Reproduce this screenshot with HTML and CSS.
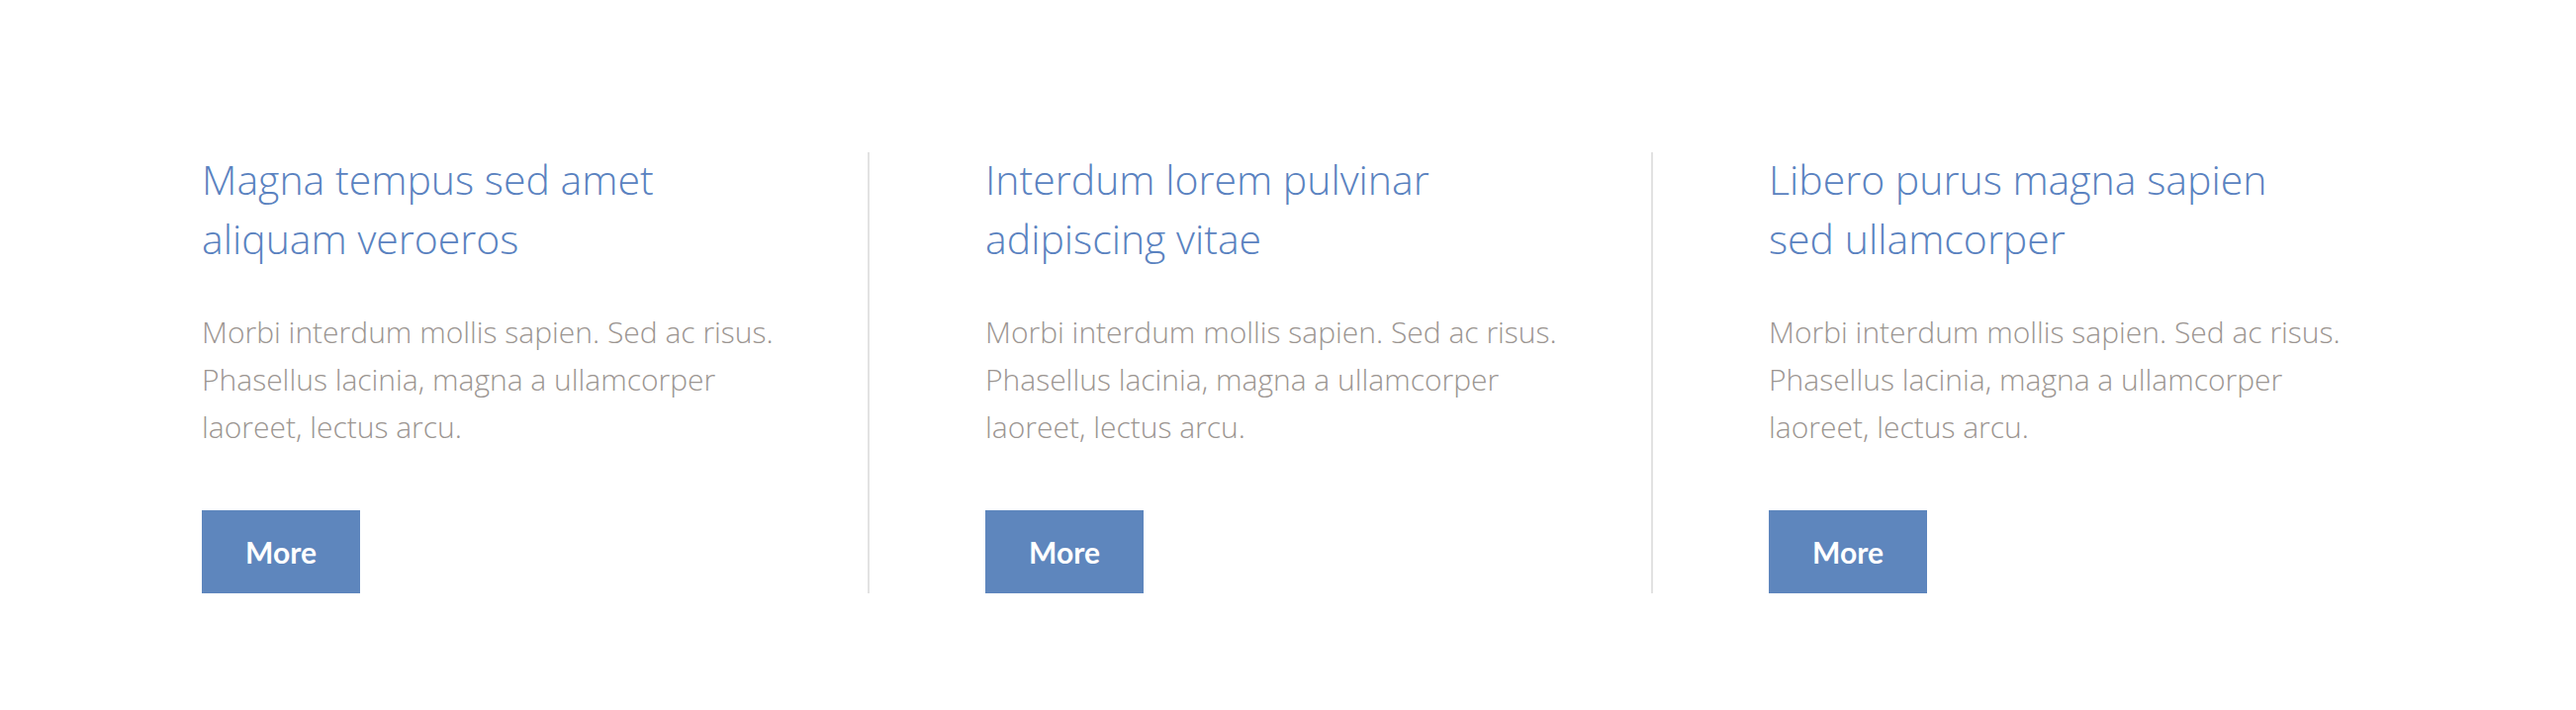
FILE: index.html
```html
<!DOCTYPE html>
<html lang="en">
<head>
<meta charset="utf-8">
<title>Features</title>
<link rel="stylesheet" href="styles.css">
</head>
<body>
<section class="features">
  <article class="feature">
    <h3 class="feature-title">Magna tempus sed amet<br>aliquam veroeros</h3>
    <p class="feature-text">Morbi interdum mollis sapien. Sed ac risus. Phasellus lacinia, magna a ullamcorper laoreet, lectus arcu.</p>
    <a class="button" href="#">More</a>
  </article>
  <article class="feature">
    <h3 class="feature-title">Interdum lorem pulvinar<br>adipiscing vitae</h3>
    <p class="feature-text">Morbi interdum mollis sapien. Sed ac risus. Phasellus lacinia, magna a ullamcorper laoreet, lectus arcu.</p>
    <a class="button" href="#">More</a>
  </article>
  <article class="feature">
    <h3 class="feature-title">Libero purus magna sapien<br>sed ullamcorper</h3>
    <p class="feature-text">Morbi interdum mollis sapien. Sed ac risus. Phasellus lacinia, magna a ullamcorper laoreet, lectus arcu.</p>
    <a class="button" href="#">More</a>
  </article>
</section>
</body>
</html>
```
FILE: styles.css
```css
html, body {
  margin: 0;
  padding: 0;
  background: #ffffff;
}

body {
  font-family: "Open Sans", "Lato", sans-serif;
  font-weight: 300;
}

.features {
  display: grid;
  grid-template-columns: repeat(3, 792px);
  padding: 154px 0 0 85px;
}

.feature {
  padding-left: 119px;
  display: flex;
  flex-direction: column;
  align-items: flex-start;
}

.feature + .feature {
  border-left: 2px solid #e2e2e2;
  padding-left: 117px;
}

.feature-title {
  margin: -3px 0 0;
  max-width: 620px;
  font-size: 41px;
  line-height: 60px;
  font-weight: 300;
  color: #5a82c0;
}

.feature-text {
  margin: 41px 0 0;
  max-width: 620px;
  font-size: 30px;
  line-height: 48px;
  font-weight: 300;
  color: #9b9591;
}

.button {
  margin-top: 60px;
  width: 160px;
  height: 84px;
  display: flex;
  align-items: center;
  justify-content: center;
  background: #5e86bd;
  color: #ffffff;
  font-family: "Lato", "Open Sans", sans-serif;
  font-weight: 700;
  font-size: 30px;
  text-decoration: none;
}
```
